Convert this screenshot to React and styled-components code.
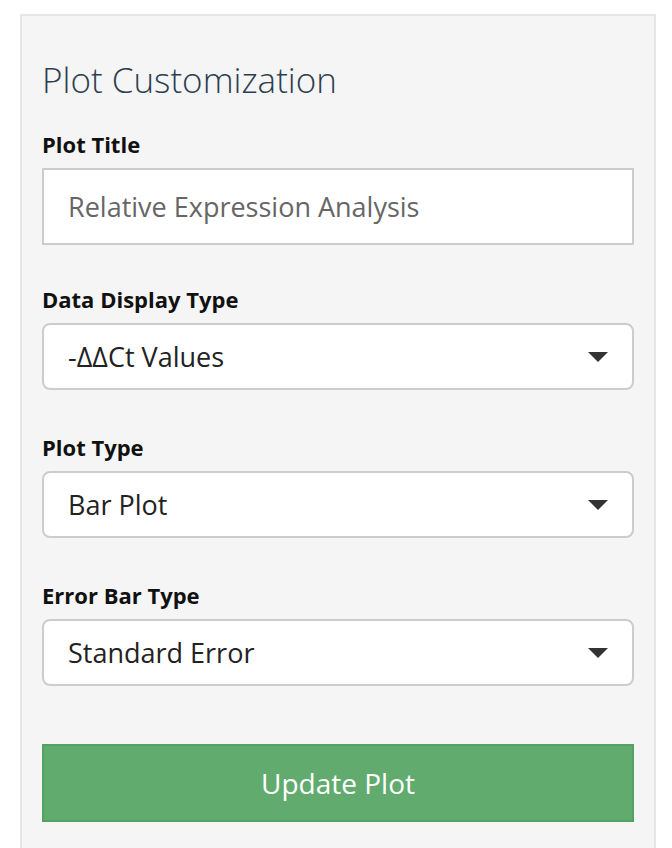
import React from 'react';
import styled, { createGlobalStyle } from 'styled-components';

const Global = createGlobalStyle`
  body { margin: 0; background: #fff; font-family: "Open Sans", sans-serif; }
`;

const Page = styled.div`
  padding: 14px 16px 0 20px;
  height: 848px;
  box-sizing: border-box;
  overflow: hidden;
`;

const Well = styled.div`
  background: #f5f5f5;
  border: 2px solid #e6e6e6;
  border-bottom: none;
  padding: 40px 20px 40px 20px;
  height: 900px;
  box-sizing: border-box;
`;

const Title = styled.h3`
  margin: 0 0 25px;
  font: 300 35px/48px "Open Sans", sans-serif;
  color: #2c3e50;
`;

const Label = styled.div`
  font: 700 22px/30px "Open Sans", sans-serif;
  color: #111;
  margin-bottom: 9px;
`;

const Group = styled.div`
  margin-bottom: ${(p) => p.$gap || 38}px;
`;

const TextBox = styled.div`
  height: 77px;
  box-sizing: border-box;
  border: 2px solid #ccc;
  background: #fff;
  display: flex;
  align-items: center;
  padding: 0 24px;
  font: 400 27px "Open Sans", sans-serif;
  color: #666;
`;

const Select = styled.div`
  height: 67px;
  box-sizing: border-box;
  border: 2px solid #ccc;
  border-radius: 8px;
  background: #fff;
  display: flex;
  align-items: center;
  justify-content: space-between;
  padding: 0 24px;
  font: 400 27px "Open Sans", sans-serif;
  color: #222;
`;

const Caret = styled.span`
  width: 0;
  height: 0;
  border-left: 10px solid transparent;
  border-right: 10px solid transparent;
  border-top: 10px solid #333;
`;

const Button = styled.div`
  height: 78px;
  box-sizing: border-box;
  background: #62ab6f;
  border: 2px solid #55a063;
  color: #fff;
  display: flex;
  align-items: center;
  justify-content: center;
  font: 400 28px "Open Sans", sans-serif;
`;

const selects = [
  ['Data Display Type', '-ΔΔCt Values'],
  ['Plot Type', 'Bar Plot'],
  ['Error Bar Type', 'Standard Error'],
];

export default function App() {
  return (
    <Page>
      <Global />
      <Well>
        <Title>Plot Customization</Title>
        <Group $gap={39}>
          <Label>Plot Title</Label>
          <TextBox>Relative Expression Analysis</TextBox>
        </Group>
        {selects.map(([label, value], i) => (
          <Group key={label} $gap={i === 2 ? 58 : 42}>
            <Label>{label}</Label>
            <Select>
              {value}
              <Caret />
            </Select>
          </Group>
        ))}
        <Button>Update Plot</Button>
      </Well>
    </Page>
  );
}
